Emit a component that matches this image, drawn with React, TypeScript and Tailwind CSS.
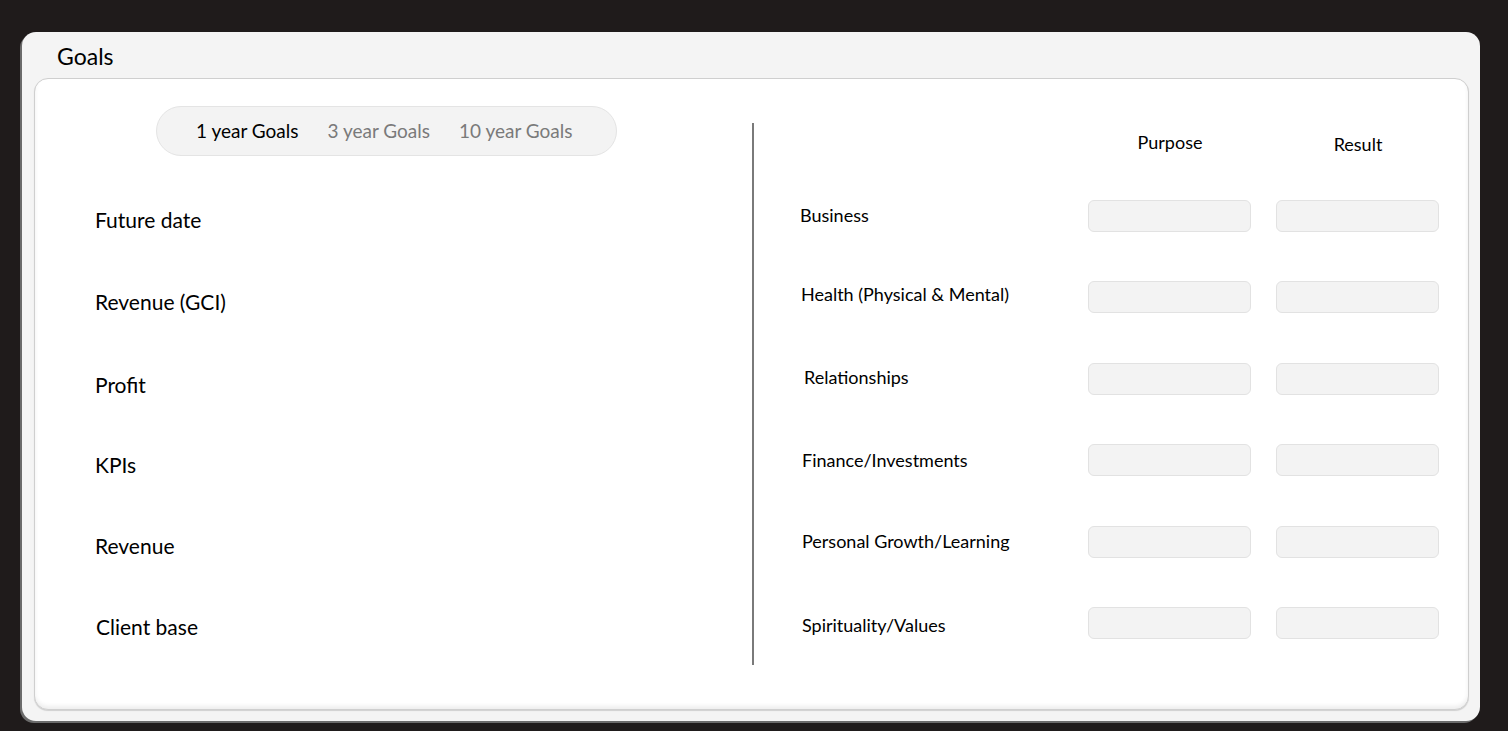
import React from "react";

const leftRows = [
  { label: "Future date", h: "h-[80px]", dx: "pl-0" },
  { label: "Revenue (GCI)", h: "h-[84px]", dx: "pl-0" },
  { label: "Profit", h: "h-[81px]", dx: "pl-0" },
  { label: "KPIs", h: "h-[80px]", dx: "pl-0" },
  { label: "Revenue", h: "h-[81px]", dx: "pl-0" },
  { label: "Client base", h: "h-[81px]", dx: "pl-[1px]" },
];

const rightRows = [
  { label: "Business", dx: "pl-0", dy: "mb-[1px]" },
  { label: "Health (Physical & Mental)", dx: "pl-[1px]", dy: "mb-[6px]" },
  { label: "Relationships", dx: "pl-[4px]", dy: "mb-[3px]" },
  { label: "Finance/Investments", dx: "pl-[2px]", dy: "mb-0" },
  { label: "Personal Growth/Learning", dx: "pl-[2px]", dy: "mb-0" },
  { label: "Spirituality/Values", dx: "pl-[2px]", dy: "mt-[4px]" },
];

export default function App() {
  return (
    <div
      className="min-h-screen w-full bg-[#1f1b1b] pl-[22px] pt-[32px] text-black"
      style={{ fontFamily: "Lato, 'Noto Sans', sans-serif" }}
    >
      <div className="w-[1458px] h-[689px] rounded-[14px] bg-[#f4f4f4] shadow-[-2px_2px_0_#6b6b6b] flex flex-col">
        <div className="h-[46px] pl-[35px] flex items-center pt-[2px] text-[23px]">Goals</div>
        <div className="ml-[12px] mr-[11px] h-[632px] rounded-[14px] bg-white border border-[#cfcfcf] shadow-[inset_0_-3px_4px_rgba(0,0,0,0.07),0_1px_1px_rgba(0,0,0,0.15)] flex">
          {/* left: horizon goals */}
          <div className="w-[717px] pt-[27px] pl-[60px]">
            <div className="ml-[61px] w-[461px] h-[50px] rounded-full bg-[#f3f3f3] border border-[#e4e4e4] flex items-center pl-[39px] gap-[29px] text-[19px]">
              <span className="text-black">1 year Goals</span>
              <span className="text-[#7a7a7a]">3 year Goals</span>
              <span className="text-[#7a7a7a]">10 year Goals</span>
            </div>
            <div className="mt-[24px]">
              {leftRows.map((r) => (
                <div key={r.label} className={`${r.h} ${r.dx} flex items-center text-[21px]`}>
                  {r.label}
                </div>
              ))}
            </div>
          </div>

          <div className="mt-[44px] h-[542px] w-[2px] bg-[#7a7a7a]" />

          {/* right: life areas */}
          <div className="flex-1 pl-[46px] pr-[29px] pt-[50px]">
            <div className="flex h-[26px] items-center text-[18px]">
              <div className="flex-1" />
              <div className="w-[162px] text-center">Purpose</div>
              <div className="w-[26px]" />
              <div className="w-[162px] text-center pt-[4px]">Result</div>
            </div>
            <div className="mt-[20px]">
              {rightRows.map((r) => (
                <div key={r.label} className="h-[81.5px] flex items-center">
                  <div className={`flex-1 text-[18px] ${r.dx} ${r.dy}`}>{r.label}</div>
                  <div className="w-[163px] h-[32px] rounded-[6px] bg-[#f3f3f3] border border-[#e2e2e2]" />
                  <div className="w-[25px]" />
                  <div className="w-[163px] h-[32px] rounded-[6px] bg-[#f3f3f3] border border-[#e2e2e2]" />
                </div>
              ))}
            </div>
          </div>
        </div>
      </div>
    </div>
  );
}
